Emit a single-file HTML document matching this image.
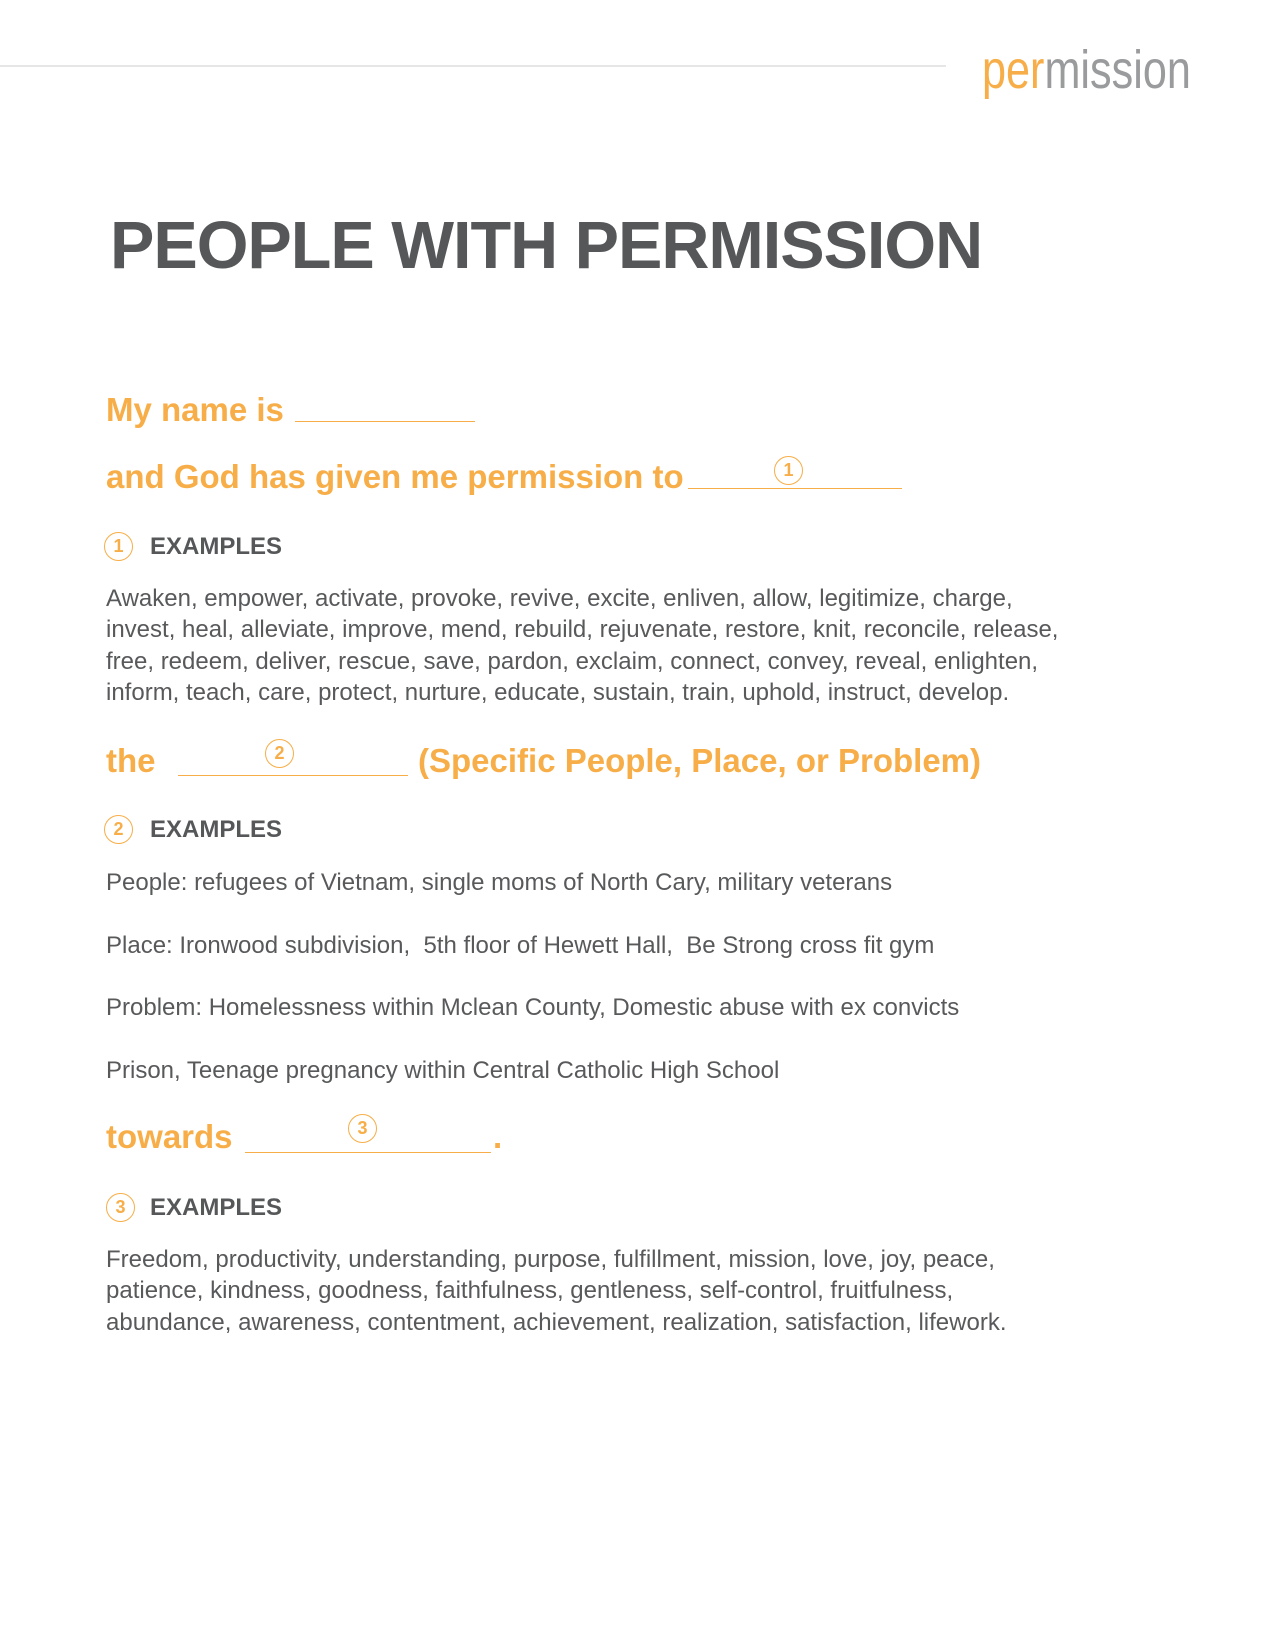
<!DOCTYPE html>
<html><head><meta charset="utf-8"><style>
html,body{margin:0;padding:0;background:#fff}
body{width:1275px;height:1650px;position:relative;overflow:hidden;font-family:"Liberation Sans",sans-serif}
.a{position:absolute;white-space:nowrap}
.h{color:#F7AE48;font-weight:bold;font-size:33px;line-height:40px}
.u{position:absolute;height:0;border-top:1.5px solid #F7AE48}
.c{position:absolute;width:27px;height:27px;border:1.5px solid #F7AE48;border-radius:50%;color:#F7AE48;font-size:18px;line-height:27px;text-align:center;font-weight:bold;box-sizing:content-box}
.ex{color:#555759;font-weight:bold;font-size:24px;line-height:30px}
.b{color:#58595b;font-size:24px;line-height:31.3px}
</style></head><body>
<div style="position:absolute;left:0;top:65px;width:946px;height:2px;background:#e6e6e6"></div>
<div class="a" style="left:982px;top:40px;font-size:54px;line-height:60px;color:#9a9b9d;transform:scaleX(0.8);transform-origin:left top"><span style="color:#F7AE48">per</span>mission</div>
<div class="a" style="left:110px;top:208px;font-size:66.5px;line-height:76px;font-weight:bold;color:#555759;letter-spacing:-1px">PEOPLE WITH PERMISSION</div>

<div class="a h" style="left:106px;top:390px">My name is</div>
<div class="u" style="left:295px;width:180px;top:421px"></div>

<div class="a h" style="left:106px;top:457px">and God has given me permission to</div>
<div class="u" style="left:688px;width:214px;top:488px"></div>
<div class="c" style="left:774px;top:456px">1</div>

<div class="c" style="left:104px;top:532px">1</div>
<div class="a ex" style="left:150px;top:532px">EXAMPLES</div>
<div class="a b" style="left:106px;top:583px">Awaken, empower, activate, provoke, revive, excite, enliven, allow, legitimize, charge,<br>invest, heal, alleviate, improve, mend, rebuild, rejuvenate, restore, knit, reconcile, release,<br>free, redeem, deliver, rescue, save, pardon, exclaim, connect, convey, reveal, enlighten,<br>inform, teach, care, protect, nurture, educate, sustain, train, uphold, instruct, develop.</div>

<div class="a h" style="left:106px;top:741px">the</div>
<div class="u" style="left:178px;width:230px;top:775px"></div>
<div class="c" style="left:265px;top:739px">2</div>
<div class="a h" style="left:418px;top:741px">(Specific People, Place, or Problem)</div>

<div class="c" style="left:104px;top:815px">2</div>
<div class="a ex" style="left:150px;top:815px">EXAMPLES</div>
<div class="a b" style="left:106px;top:867px">People: refugees of Vietnam, single moms of North Cary, military veterans</div>
<div class="a b" style="left:106px;top:930px">Place: Ironwood subdivision,&nbsp; 5th floor of Hewett Hall,&nbsp; Be Strong cross fit gym</div>
<div class="a b" style="left:106px;top:992px">Problem: Homelessness within Mclean County, Domestic abuse with ex convicts</div>
<div class="a b" style="left:106px;top:1055px">Prison, Teenage pregnancy within Central Catholic High School</div>

<div class="a h" style="left:106px;top:1117px">towards</div>
<div class="u" style="left:245px;width:246px;top:1152px"></div>
<div class="a h" style="left:493px;top:1117px">.</div>
<div class="c" style="left:348px;top:1114px">3</div>

<div class="c" style="left:106px;top:1193px">3</div>
<div class="a ex" style="left:150px;top:1193px">EXAMPLES</div>
<div class="a b" style="left:106px;top:1244px">Freedom, productivity, understanding, purpose, fulfillment, mission, love, joy, peace,<br>patience, kindness, goodness, faithfulness, gentleness, self-control, fruitfulness,<br>abundance, awareness, contentment, achievement, realization, satisfaction, lifework.</div>
</body></html>
